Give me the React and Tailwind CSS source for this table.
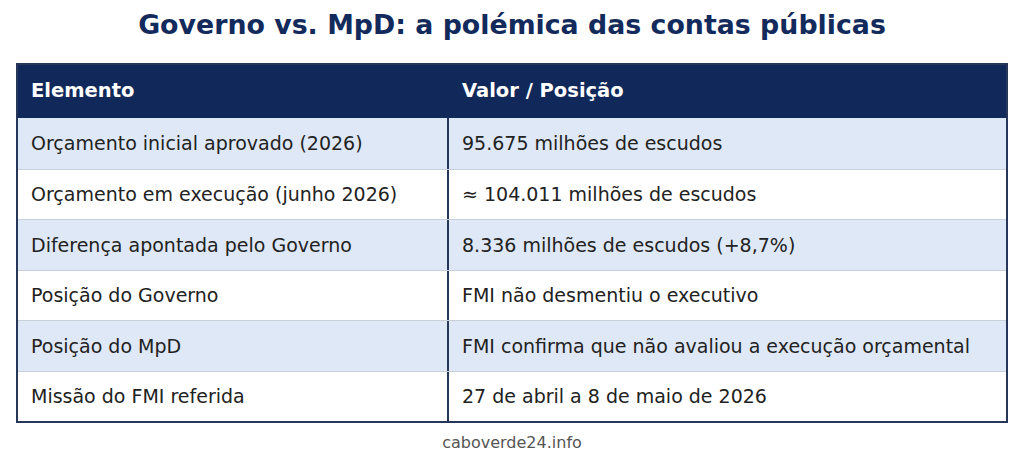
import React from "react";

const rows = [
  ["Orçamento inicial aprovado (2026)", "95.675 milhões de escudos"],
  ["Orçamento em execução (junho 2026)", "≈ 104.011 milhões de escudos"],
  ["Diferença apontada pelo Governo", "8.336 milhões de escudos (+8,7%)"],
  ["Posição do Governo", "FMI não desmentiu o executivo"],
  ["Posição do MpD", "FMI confirma que não avaliou a execução orçamental"],
  ["Missão do FMI referida", "27 de abril a 8 de maio de 2026"],
];

export default function App() {
  return (
    <div className="w-[1024px] h-[466px] bg-white font-['DejaVu_Sans',sans-serif]">
      {/* Title */}
      <div className="h-[51px] flex items-center justify-center">
        <h1 className="text-[26.8px] font-bold text-[#132a5c] leading-none">
          Governo vs. MpD: a polémica das contas públicas
        </h1>
      </div>

      {/* Table */}
      <div className="mt-[12px] mx-[16px] border-2 border-[#26375a]">
        <div className="h-[53px] bg-[#10295a] grid grid-cols-[431px_1fr] text-white font-bold text-[19.5px]">
          <div className="flex items-center pl-[13px] pb-[2px]">Elemento</div>
          <div className="flex items-center pl-[13px] pb-[2px]">Valor / Posição</div>
        </div>
        {rows.map((r, i) => (
          <div
            key={i}
            className={`h-[50.5px] grid grid-cols-[431px_1fr] text-[19px] text-[#222] ${
              i % 2 === 0 ? "bg-[#dfe8f6]" : "bg-white"
            } ${i > 0 ? "border-t border-[#c9d0da]" : ""}`}
          >
            <div className="flex items-center pl-[13px] border-r-2 border-[#26375a]">{r[0]}</div>
            <div className="flex items-center pl-[13px]">{r[1]}</div>
          </div>
        ))}
      </div>

      {/* Source */}
      <div className="mt-[8px] text-center text-[16px] text-[#555]">caboverde24.info</div>
    </div>
  );
}
